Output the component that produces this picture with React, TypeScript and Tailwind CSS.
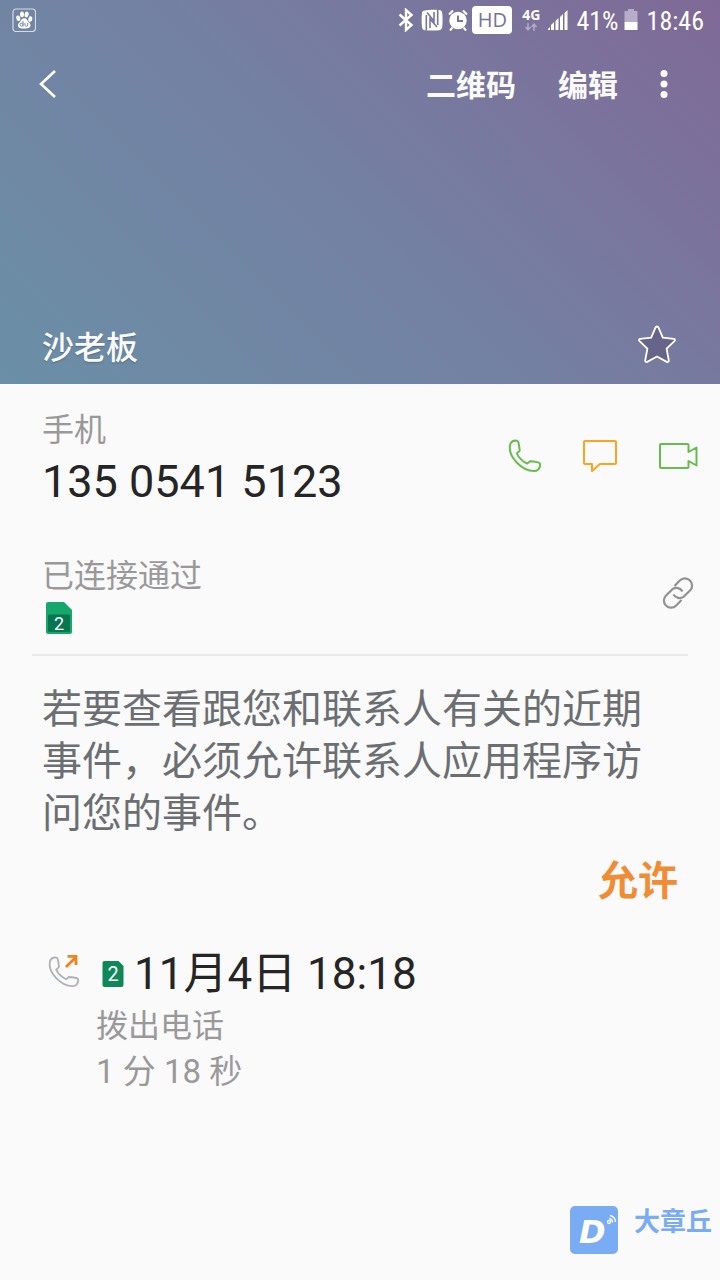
import React from 'react';

interface IconProps {
  className: string;
}

const FONT = "font-['Roboto','Noto_Sans_CJK_SC',sans-serif]";

function StatusBar() {
  return (
    <div className="flex h-10 items-center justify-between pl-3 pr-4">
      <svg className="h-6 w-6" viewBox="0 0 24 24" fill="none">
        <rect x="1" y="1" width="22.5" height="22.5" rx="3" stroke="#d3dbe6" strokeWidth="1.2" />
        <g fill="#fff">
          <ellipse cx="6.3" cy="10.3" rx="2" ry="2.8" transform="rotate(-15 6.3 10.3)" />
          <ellipse cx="10" cy="6.3" rx="2" ry="2.9" />
          <ellipse cx="14.6" cy="6.5" rx="2" ry="2.9" transform="rotate(12 14.6 6.5)" />
          <ellipse cx="18.3" cy="11" rx="2" ry="2.8" transform="rotate(12 18.3 11)" />
          <path d="M12.2 10.3c2.4 0 3 2.2 4.4 3.6 1.7 1.6 2.3 2.6 1.7 4.6-.8 2.2-3.6 1.9-6.1 1.9s-5.3.4-6-1.9c-.6-2 .1-3.100 1.700-4.600 1.400-1.400 1.900-3.600 4.300-3.600z" />
        </g>
        <path d="M11 13v5.500M11 16.600a1.500 1.500 0 1 0-3 0 1.500 1.500 0 0 0 3 0M13 15v2.200c0 1.400 2.700 1.400 2.700 0V15" stroke="#7189a8" strokeWidth="1" />
      </svg>
      <div className="flex items-center text-white">
        <svg className="mr-1.5 h-6 w-4" viewBox="0 0 16 24" fill="none" stroke="#fff" strokeWidth="2.4">
          <path d="M1.500 6.500l12 10.500-5.500 5V2l5.500 5L1.500 17.500" />
        </svg>
        <svg className="mr-1 h-6 w-6" viewBox="0 0 24 24">
          <path d="M5 2.500C9 1.500 15 1.500 19 2c2 .2 3 1 3.200 3 .5 4 .5 10 0 14-.3 2-1.200 3-3.200 3.200-4 .5-10 .5-14 0-2-.2-2.800-1.200-3-3.200-.5-4-.5-10 0-14 .2-1.600 1-2.300 3-2.500z" fill="#fff" />
          <path d="M6.300 22.500V7M17.700 1.500V17" fill="none" stroke="#7676a0" strokeWidth="1.600" />
          <path d="M10 20v-9l7 8M14 4v9L7 4.500" fill="none" stroke="#7676a0" strokeWidth="1.600" />
        </svg>
        <svg className="mr-1 h-6 w-5" viewBox="0 0 20 24" fill="none">
          <circle cx="10" cy="12.500" r="8.700" fill="#fff" />
          <path d="M1 6.500l4-4M19 6.500l-4-4M4.500 19.500L2 22.500M15.500 19.500l2.500 3" stroke="#fff" strokeWidth="2" />
          <path d="M10 7.500v5.500h5" stroke="#77749f" strokeWidth="2" />
        </svg>
        <span className="mr-2.5 flex h-7 w-10 items-center justify-center rounded-sm bg-white font-['Open_Sans',sans-serif] text-xl text-[#77729f]">HD</span>
        <span className="mr-2 flex flex-col items-center font-['Open_Sans',sans-serif] text-sm leading-3 font-bold">
          4G
          <svg className="mt-0.5 h-2 w-3" viewBox="0 0 12 8" fill="none" stroke="#b3abc6" strokeWidth="1.500">
            <path d="M3 0v6M.5 4L3 6.800 5.500 4M9 8V1.500M6.500 4L9 1.200 11.500 4" />
          </svg>
        </span>
        <svg className="mr-2 h-6 w-5" viewBox="0 0 20 24" fill="#fff">
          <path d="M0 22v-1l2-2v3zM3 22v-5l3-3v8zM7.500 22v-9l3-3v12zM12 22V9l3-3v16zM16.500 22V5l3-3v20z" />
        </svg>
        <span className="mr-1 pt-0.5 font-['Roboto_Condensed','Roboto',sans-serif] text-[26px] leading-9">41%</span>
        <svg className="mr-2 h-6 w-4" viewBox="0 0 16 24">
          <path d="M5 1h6v2h3.500v11h-13V3H5z" fill="#b7adca" />
          <path d="M1.500 14h13v8h-13z" fill="#fff" />
        </svg>
        <span className="pt-0.5 font-['Roboto_Condensed','Roboto',sans-serif] text-[26px] leading-9">18:46</span>
      </div>
    </div>
  );
}

function Toolbar() {
  return (
    <nav className="flex h-22 items-center justify-between pl-9 pr-10">
      <button aria-label="返回" className="flex h-12 w-6 items-center justify-center">
        <svg className="h-8 w-6" viewBox="0 0 24 32" fill="none" stroke="#fff" strokeWidth="2.600">
          <path d="M19 3L5 16l14 13" />
        </svg>
      </button>
      <div className="flex items-center text-3xl font-bold text-[#fafafa]">
        <button className="mr-10.5 pt-1">二维码</button>
        <button className="mr-7.5 pt-1">编辑</button>
        <button aria-label="更多选项" className="flex w-8 justify-center">
          <svg className="h-8 w-2" viewBox="0 0 8 32" fill="#fafafa">
            <circle cx="4" cy="5.500" r="3.500" />
            <circle cx="4" cy="16" r="3.500" />
            <circle cx="4" cy="26.500" r="3.500" />
          </svg>
        </button>
      </div>
    </nav>
  );
}

function HandsetIcon({ className }: IconProps) {
  return (
    <svg className={className} viewBox="0 0 34 34" fill="none" stroke="currentColor" strokeWidth="2" strokeLinejoin="round">
      <path d="M2.500 4.500C4 2 6.500 1.300 9 1.800c1 .2 1.300 1 1.500 2 .5 2.500.9 5 1.200 7.500-.2 1.500-2.200 2-2.900 3.200 1.500 3.800 6.300 8.500 10.300 10 1.500-.3 1.700-1.800 3.200-2.200 2.500 0 5.500.6 8.500 1.300 1 .3 1.300.8 1.300 1.700 0 2.700-1.500 5.500-3.800 6.500C14.500 33.500-1.500 17 2.500 4.500z" />
    </svg>
  );
}

function SimCard({ className }: IconProps) {
  return (
    <span className={`relative flex justify-center ${className}`}>
      <svg className="absolute inset-0 h-full w-full" viewBox="0 0 26 32">
        <path d="M2 0h16l8 8v22a2 2 0 0 1-2 2H2a2 2 0 0 1-2-2V2a2 2 0 0 1 2-2z" fill="#15a76c" />
        <rect x="2" y="12.500" width="22" height="17.500" rx="1.500" fill="#067650" />
      </svg>
      <span className="relative pt-3 text-lg leading-5 text-white">2</span>
    </span>
  );
}

function SimBadge({ className }: IconProps) {
  return (
    <span className={`relative flex items-center justify-center ${className}`}>
      <svg className="absolute inset-0 h-full w-full" viewBox="0 0 21 26">
        <path d="M2 0h14l5 5v19a2 2 0 0 1-2 2H2a2 2 0 0 1-2-2V2a2 2 0 0 1 2-2z" fill="#0f8758" />
      </svg>
      <span className="relative text-xl leading-6 text-white">2</span>
    </span>
  );
}

function Watermark() {
  return (
    <footer className="mt-auto flex justify-end pr-2 pb-6.5">
      <svg className="mr-4 h-12 w-12" viewBox="0 0 48 48">
        <rect width="48" height="48" rx="5" fill="#7aacf3" />
        <text x="9" y="37" fontFamily="DejaVu Sans, sans-serif" fontSize="32" fontWeight="bold" fontStyle="italic" fill="#fff">D</text>
        <g fill="none" stroke="#fff" strokeWidth="1.300">
          <circle cx="39" cy="16" r="1.500" />
          <path d="M39 12.500a4 4 0 0 1 3.500 4M40 9.500a7 7 0 0 1 5.500 6.500" />
        </g>
      </svg>
      <span className="text-[26px] leading-8 font-bold text-[#7aacf3]">大章丘</span>
    </footer>
  );
}

export default function App() {
  return (
    <main lang="zh-CN" className={`flex min-h-screen flex-col bg-[#fafafa] text-[#252525] ${FONT}`}>
      <header className="bg-linear-45 from-[#6a8fa6] via-[#7480a2] to-[#7f6997]">
        <StatusBar />
        <Toolbar />
        <div className="flex items-start justify-between pt-49 pr-11 pb-3 pl-10.5">
          <h1 className="text-[32px] leading-12 font-medium text-[#fafafa] text-shadow-sm">沙老板</h1>
          <button aria-label="收藏">
            <svg className="h-10 w-10" viewBox="0 0 40 40" fill="#666489" stroke="#fff" strokeWidth="1.800" strokeLinejoin="round">
              <path d="M21 2.500q1 0 1.500 1.200l4.300 10 11 1.200q2 .6.600 2.200l-7.800 7.600 2.200 11.800q0 2-2 1.400L21 32.500l-9.800 5.400q-2 .6-2-1.400l2.200-11.800-7.800-7.600q-1.400-1.600.6-2.200l11-1.200 4.300-10Q20 2.500 21 2.500z" />
            </svg>
          </button>
        </div>
      </header>

      {/* Phone number and quick actions */}
      <section className="flex items-center justify-between pt-6 pr-5.5 pl-10.5">
        <div>
          <p className="text-[32px] leading-11 text-[#999]">手机</p>
          <p className="text-[45px] leading-15">135 0541 5123</p>
        </div>
        <div className="flex items-center gap-10 pb-2">
          <button aria-label="拨打电话" className="text-[#68bc4d]">
            <HandsetIcon className="h-8.5 w-8.5" />
          </button>
          <button aria-label="发送信息">
            <svg className="h-9 w-9" viewBox="0 0 36 36" fill="none" stroke="#faa51e" strokeWidth="2" strokeLinejoin="round">
              <path d="M3 3h30a1 1 0 0 1 1 1v21a1 1 0 0 1-1 1H18l-8 7v-7H3a1 1 0 0 1-1-1V4a1 1 0 0 1 1-1z" />
            </svg>
          </button>
          <button aria-label="视频通话">
            <svg className="h-9 w-10" viewBox="0 0 40 36" fill="none" stroke="#68bc4d" strokeWidth="2" strokeLinejoin="round">
              <path d="M3 6h26.500a1 1 0 0 1 1 1v7l8-4.500v18l-8-4.500v6a1 1 0 0 1-1 1H3a1 1 0 0 1-1-1V7a1 1 0 0 1 1-1z" />
            </svg>
          </button>
        </div>
      </section>

      {/* Linked account */}
      <section className="mx-8 flex items-center justify-between border-b-2 border-[#e9e9e9] pt-10 pb-5 pl-2.5">
        <div>
          <p className="text-[32px] leading-12 text-[#999]">已连接通过</p>
          <SimCard className="mt-0.5 ml-1 h-8 w-6.5" />
        </div>
        <button aria-label="管理链接" className="-mr-2">
          <svg className="h-9 w-9" viewBox="0 0 36 36" fill="none" stroke="#929292" strokeWidth="2.200">
            <path d="M14.500 11l5.300-5.500a7 7 0 0 1 10.200 0 7 7 0 0 1 0 10l-6.500 6.300a7 7 0 0 1-10-2.300" />
            <path d="M21.500 25l-5.300 5.500a7 7 0 0 1-10.200 0 7 7 0 0 1 0-10l6.500-6.300a7 7 0 0 1 10 2.300" />
          </svg>
        </button>
      </section>

      {/* Permission prompt */}
      <section className="flex flex-col pt-7 pr-10.5 pl-10.5">
        <p className="text-[40px] leading-13 text-[#6b6f72]">若要查看跟您和联系人有关的近期事件，必须允许联系人应用程序访问您的事件。</p>
        <button className="mt-4 self-end text-[40px] leading-13 font-bold text-[#f08c33]">允许</button>
      </section>

      {/* Call history */}
      <section className="flex pt-9 pl-12">
        <span className="relative mt-3 mr-4 h-8 w-8 text-[#b0b3b5]">
          <HandsetIcon className="h-8 w-8" />
          <svg className="absolute -top-0.5 right-0.5 h-4 w-4" viewBox="0 0 16 16" fill="none" stroke="#ee8420" strokeWidth="2.800">
            <path d="M4 13L14 3M5.500 2.400H14V11" />
          </svg>
        </span>
        <div>
          <p className="flex items-center pl-1.5 text-[44px] leading-15">
            <SimBadge className="mr-2.5 h-6.5 w-5.5" />
            11月4日 18:18
          </p>
          <p className="text-[32px] leading-11 text-[#999]">拨出电话</p>
          <p className="text-[33px] leading-12 text-[#999]">1 分 18 秒</p>
        </div>
      </section>

      <Watermark />
    </main>
  );
}
